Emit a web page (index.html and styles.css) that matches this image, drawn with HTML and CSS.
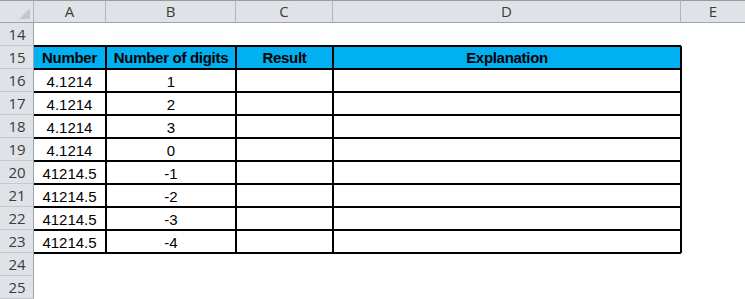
FILE: index.html
```html
<!DOCTYPE html>
<html>
<head>
<meta charset="utf-8">
<link rel="stylesheet" href="styles.css">
</head>
<body>
<div class="sheet">
  <div class="corner"><span class="tri"></span></div>
  <div class="colhead">A</div>
  <div class="colhead">B</div>
  <div class="colhead">C</div>
  <div class="colhead">D</div>
  <div class="colhead last">E</div>

  <div class="rowhead">14</div>
  <div class="cell above"></div><div class="cell above"></div><div class="cell above"></div><div class="cell above"></div><div class="cell"></div>

  <div class="rowhead">15</div>
  <div class="cell t th first">Number</div>
  <div class="cell t th">Number of digits</div>
  <div class="cell t th">Result</div>
  <div class="cell t th">Explanation</div>
  <div class="cell side"></div>

  <div class="rowhead">16</div>
  <div class="cell t first">4.1214</div><div class="cell t">1</div><div class="cell t"></div><div class="cell t"></div><div class="cell side"></div>
  <div class="rowhead">17</div>
  <div class="cell t first">4.1214</div><div class="cell t">2</div><div class="cell t"></div><div class="cell t"></div><div class="cell side"></div>
  <div class="rowhead">18</div>
  <div class="cell t first">4.1214</div><div class="cell t">3</div><div class="cell t"></div><div class="cell t"></div><div class="cell side"></div>
  <div class="rowhead">19</div>
  <div class="cell t first">4.1214</div><div class="cell t">0</div><div class="cell t"></div><div class="cell t"></div><div class="cell side"></div>
  <div class="rowhead">20</div>
  <div class="cell t first">41214.5</div><div class="cell t">-1</div><div class="cell t"></div><div class="cell t"></div><div class="cell side"></div>
  <div class="rowhead">21</div>
  <div class="cell t first">41214.5</div><div class="cell t">-2</div><div class="cell t"></div><div class="cell t"></div><div class="cell side"></div>
  <div class="rowhead">22</div>
  <div class="cell t first">41214.5</div><div class="cell t">-3</div><div class="cell t"></div><div class="cell t"></div><div class="cell side"></div>
  <div class="rowhead">23</div>
  <div class="cell t first">41214.5</div><div class="cell t">-4</div><div class="cell t"></div><div class="cell t"></div><div class="cell side"></div>

  <div class="rowhead">24</div>
  <div class="cell below"></div><div class="cell below"></div><div class="cell below"></div><div class="cell below"></div><div class="cell"></div>
  <div class="rowhead">25</div>
  <div class="cell"></div><div class="cell"></div><div class="cell"></div><div class="cell"></div><div class="cell"></div>
</div>
</body>
</html>
```

FILE: styles.css
```css
html, body {
  margin: 0;
  padding: 0;
  background: #fff;
}
body {
  font-family: "Liberation Sans", Arial, sans-serif;
  overflow: hidden;
}
.sheet {
  display: grid;
  grid-template-columns: 34px 72px 130px 97px 348px 64px;
  grid-auto-rows: 23px;
  width: 745px;
}
.corner, .colhead, .rowhead {
  background: #dfe3e8;
  box-sizing: border-box;
  color: #3b3b3b;
}
.corner, .colhead {
  border-top: 1px solid #9b9b9b;
  border-right: 1px solid #b1b6bc;
  border-bottom: 1px solid #9ea4ab;
}
.corner {
  position: relative;
}
.corner .tri {
  position: absolute;
  right: 3px;
  bottom: 3px;
  width: 0;
  height: 0;
  border-left: 11px solid transparent;
  border-bottom: 11px solid #c3c8ce;
}
.colhead {
  font-size: 15px;
  line-height: 21px;
  text-align: center;
  font-family: "Open Sans", sans-serif;
  font-weight: 400;
}
.colhead.last { border-right: none; }
.rowhead {
  border-right: 1px solid #9ea4ab;
  border-bottom: 1px solid #c3c8ce;
  font-size: 15px;
  line-height: 22px;
  text-align: center;
  font-family: "Open Sans", sans-serif;
  padding-left: 1px;
}
.cell {
  box-sizing: border-box;
  font-size: 15px;
  line-height: 23px;
  text-align: center;
  color: #000;
  white-space: nowrap;
  overflow: hidden;
}
.cell.above { border-bottom: 1px solid #000; }
.cell.below { border-top: 1px solid #000; }
.cell.side { border-left: 1px solid #000; }
.cell.t {
  border: 1px solid #000;
  line-height: 21px;
  padding-top: 1px;
}
.cell.t.first { border-left: none; }
.cell.th {
  background: #00b0f0;
  font-weight: 700;
  padding-top: 0;
  letter-spacing: -0.3px;
}
```
